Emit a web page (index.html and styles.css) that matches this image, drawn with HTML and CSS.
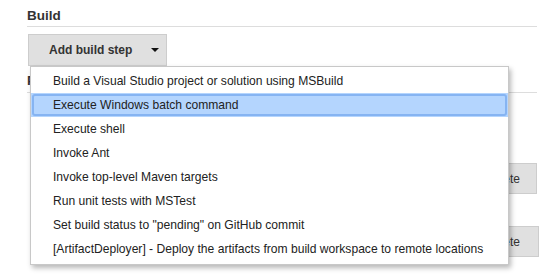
FILE: index.html
```html
<!DOCTYPE html>
<html lang="en">
<head>
  <meta charset="UTF-8" />
  <title>Build</title>
  <link rel="stylesheet" href="styles.css">
</head>
<body>
  <div class="page">
    <h2 class="section-title">Build</h2>

    <div class="step-picker">
      <button class="step-button">Add build step <span class="caret"></span></button>
      <ul class="step-menu">
        <li>Build a Visual Studio project or solution using MSBuild</li>
        <li class="active"><span>Execute Windows batch command</span></li>
        <li>Execute shell</li>
        <li>Invoke Ant</li>
        <li>Invoke top-level Maven targets</li>
        <li>Run unit tests with MSTest</li>
        <li>Set build status to "pending" on GitHub commit</li>
        <li>[ArtifactDeployer] - Deploy the artifacts from build workspace to remote locations</li>
      </ul>
    </div>

    <h2 class="section-title section-title--post">Post-build Actions</h2>

    <div class="action-row action-row--first">
      <button class="delete-button">Delete</button>
    </div>
    <div class="action-row action-row--second">
      <button class="delete-button delete-button--wide">Delete</button>
    </div>

    <p class="hint">Command line to start the rebuild</p>
  </div>
</body>
</html>
```

FILE: styles.css
```css
body {
  margin: 0;
  background: #fff;
  font-family: "Liberation Sans", Arial, sans-serif;
  color: #222;
  overflow: hidden;
}

.page {
  padding: 0 16px 0 27px;
}

.section-title {
  margin: 0;
  padding: 7px 0 1px;
  line-height: 18px;
  font-size: 13.5px;
  font-weight: bold;
  color: #333;
  border-bottom: 1px solid #ddd;
}

.section-title--post {
  padding: 6px 0 2px;
}

.step-picker {
  position: relative;
  margin-top: 7px;
  height: 32px;
}

.step-button {
  display: inline-flex;
  align-items: center;
  gap: 19px;
  height: 32px;
  margin: 0 0 0 1px;
  padding: 0 7px 0 20px;
  background: #e0e0e0;
  border: 1px solid #cdcdcd;
  font-family: inherit;
  font-size: 12px;
  font-weight: bold;
  color: #333;
}

.caret {
  width: 0;
  height: 0;
  border-left: 4px solid transparent;
  border-right: 4px solid transparent;
  border-top: 4px solid #111;
}

.step-menu {
  position: absolute;
  top: 100%;
  left: 3px;
  z-index: 10;
  box-sizing: border-box;
  width: 479px;
  margin: 0;
  padding: 2px 0 3px;
  list-style: none;
  background: #fff;
  border: 1px solid #c8c8c8;
  box-shadow: 2px 3px 5px rgba(0,0,0,0.28);
}

.step-menu li {
  padding-left: 22px;
  line-height: 24px;
  font-size: 12.1px;
  color: #222;
  white-space: nowrap;
}

.step-menu li.active {
  padding: 1px;
  background: #b4d5fe;
}

.step-menu li.active span {
  display: block;
  padding-left: 19px;
  line-height: 18px;
  border: 2px solid #86b4f2;
  border-radius: 3px;
}

.action-row {
  display: flex;
  justify-content: flex-end;
}

.action-row--first {
  margin-top: 70px;
}

.action-row--second {
  margin-top: 32px;
  margin-right: -2px;
}

.delete-button {
  height: 31px;
  padding: 0 16px;
  background: #e0e0e0;
  border: 1px solid #cdcdcd;
  font-family: inherit;
  font-size: 12px;
  color: #333;
}

.delete-button--wide {
  padding: 0 18px;
}

.hint {
  margin: 15px 0 0;
  padding-left: 20px;
  line-height: 16px;
  font-size: 12px;
  color: #333;
}
```
